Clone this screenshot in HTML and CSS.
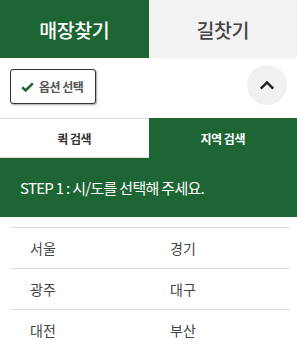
FILE: index.html
```html
<!DOCTYPE html>
<html>
<head>
    <title>매장찾기</title>
<link rel="stylesheet" href="styles.css">
</head>
<body>
    <div class="store-finder">
        <div class="main-tabs">
            <div class="main-tab active">매장찾기</div>
            <div class="main-tab">길찻기</div>
        </div>

        <div class="option-row">
            <button class="option-btn" type="button">
                <svg width="13" height="10" viewBox="0 0 13 10"><path d="M1.2 5.2 L4.6 8.4 L11.8 1.4" fill="none" stroke="#1d6633" stroke-width="2.6"/></svg>
                옵션 선택
            </button>
            <button class="toggle-btn" type="button">
                <svg width="16" height="10" viewBox="0 0 16 10"><path d="M1.8 8.6 L8 2.4 L14.2 8.6" fill="none" stroke="#222" stroke-width="2.4"/></svg>
            </button>
        </div>

        <div class="search-tabs">
            <div class="search-tab">퀵 검색</div>
            <div class="search-tab active">지역 검색</div>
        </div>

        <div class="step">STEP 1 : 시/도를 선택해 주세요.</div>

        <ul class="region-list">
            <li><span>서울</span><span>경기</span></li>
            <li><span>광주</span><span>대구</span></li>
            <li><span>대전</span><span>부산</span></li>
        </ul>
    </div>
</body>
</html>
```

FILE: styles.css
```css
body {
    margin: 0;
    background-color: #fff;
    font-family: "Noto Sans CJK KR", "Noto Sans", sans-serif;
    color: #444;
}

.store-finder {
    width: 297px;
}

.main-tabs {
    display: flex;
    height: 58px;
}

.main-tab {
    flex: 1;
    display: flex;
    align-items: center;
    justify-content: center;
    background-color: #f2f2f2;
    color: #444;
    font-size: 19.5px;
    font-weight: 500;
    letter-spacing: -0.4px;
}

.main-tab.active {
    background-color: #1d6633;
    color: #fff;
}

.option-row {
    display: flex;
    justify-content: space-between;
    align-items: flex-start;
    height: 60px;
    padding: 0 10px;
}

.option-btn {
    display: flex;
    align-items: center;
    gap: 5px;
    margin-top: 11px;
    width: 86px;
    height: 35px;
    padding: 0 0 0 10px;
    background-color: #fff;
    border: 1px solid #333;
    border-radius: 3px;
    box-shadow: 1px 1px 2px rgba(0, 0, 0, 0.35);
    font-family: "Noto Sans CJK KR", sans-serif;
    font-size: 12px;
    font-weight: bold;
    color: #555;
    letter-spacing: -0.5px;
}

.toggle-btn {
    display: flex;
    align-items: center;
    justify-content: center;
    margin-top: 7px;
    width: 40px;
    height: 40px;
    padding: 0;
    border: none;
    border-radius: 50%;
    background-color: #f1f1ef;
}

.search-tabs {
    display: flex;
    height: 40px;
}

.search-tab {
    flex: 1;
    display: flex;
    align-items: center;
    justify-content: center;
    border-top: 1px solid #ddd;
    border-bottom: 1px solid #ddd;
    font-size: 12px;
    font-weight: bold;
    color: #333;
    letter-spacing: -0.5px;
}

.search-tab.active {
    background-color: #1d6633;
    border-color: #1d6633;
    border-top-width: 2px;
    color: #fff;
}

.step {
    display: flex;
    align-items: center;
    height: 59px;
    padding-left: 20px;
    background-color: #1d6633;
    color: #fff;
    font-size: 15px;
    letter-spacing: -0.7px;
}

.region-list {
    list-style: none;
    margin: 10px 7px 0 10px;
    padding: 0;
}

.region-list li {
    display: flex;
    align-items: center;
    height: 40px;
    border-top: 1px solid #ddd;
    font-size: 14px;
    color: #444;
}

.region-list li span {
    width: 140px;
    padding-left: 20px;
}
```
